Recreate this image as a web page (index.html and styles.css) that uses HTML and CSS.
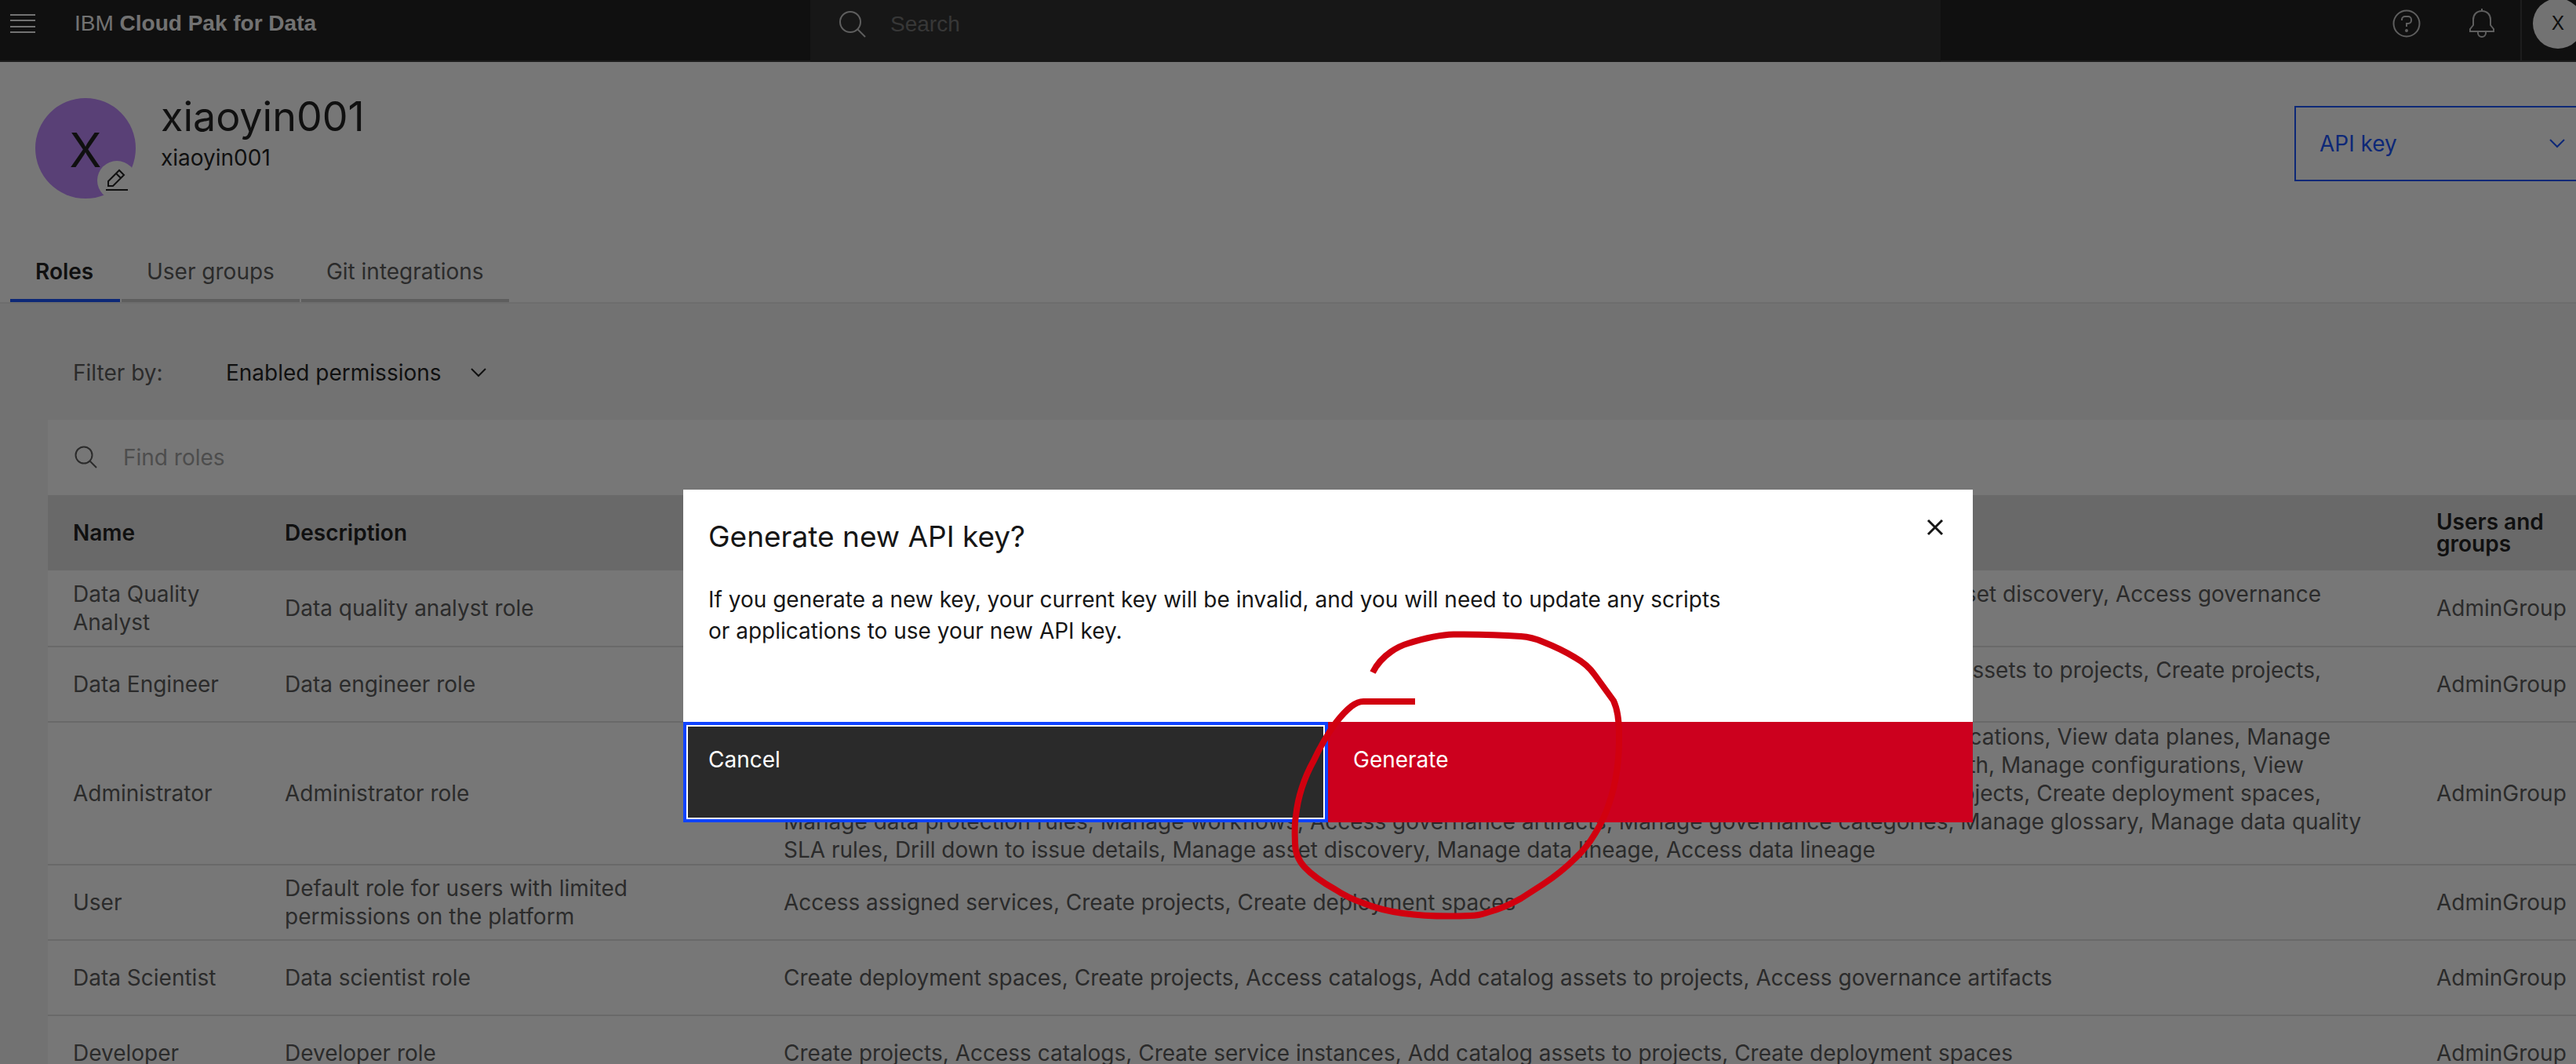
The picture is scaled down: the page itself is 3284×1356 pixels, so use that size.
FILE: index.html
```html
<!DOCTYPE html>
<html lang="en">
<head>
<meta charset="utf-8">
<title>IBM Cloud Pak for Data</title>
<link rel="stylesheet" href="styles.css">
</head>
<body>
<div class="app">
  <header class="topbar">
    <button class="icon-button menu" aria-label="Open menu">
      <svg width="32" height="24" viewBox="0 0 32 24" fill="currentColor"><path d="M0 0h32v2H0zM0 7h32v2H0zM0 15h32v2H0zM0 22h32v2H0z"/></svg>
    </button>
    <a class="brand" href="#">IBM <strong>Cloud Pak for Data</strong></a>
    <label class="global-search">
      <svg width="36" height="36" viewBox="0 0 36 36" fill="none" stroke="currentColor" stroke-width="2"><circle cx="15" cy="15" r="13"/><path d="M24 24l10 10"/></svg>
      <input type="search" placeholder="Search" aria-label="Search">
    </label>
    <div class="tools">
      <button class="icon-button" aria-label="Help">
        <svg width="36" height="36" viewBox="0 0 36 36" fill="none" stroke="currentColor" stroke-width="2"><circle cx="18" cy="18" r="16.500"/><path d="M12 14v-1a4 4 0 0 1 4-4h4a4 4 0 0 1 4 4v1a4 4 0 0 1-4 4h-2v4"/><circle cx="18" cy="27" r="1" fill="currentColor"/></svg>
      </button>
      <button class="icon-button" aria-label="Notifications">
        <svg width="36" height="40" viewBox="0 0 36 40" fill="none" stroke="currentColor" stroke-width="2"><path d="M18 1v4M18 4C11 4 7 9 7 15v7l-4 5v3h30v-3l-4-5v-7C29 9 25 4 18 4zM13 30v2a5 5 0 0 0 10 0v-2"/></svg>
      </button>
      <div class="account"><button class="account-button" aria-label="Account">X</button></div>
    </div>
  </header>

  <section class="profile">
    <div class="profile-head">
      <div class="avatar">X
        <button class="avatar-edit" aria-label="Edit picture">
          <svg width="30" height="30" viewBox="0 0 30 30" fill="none" stroke="currentColor" stroke-width="2"><path d="M1 27h28M4 22v-6L18 2l6 6-14 14zM14 6l6 6"/></svg>
        </button>
      </div>
      <div class="identity">
        <h1>xiaoyin001</h1>
        <p>xiaoyin001</p>
      </div>
      <button class="api-key">API key
        <svg width="22" height="14" viewBox="0 0 22 14" fill="none" stroke="currentColor" stroke-width="2"><path d="M2 2l9 9 9-9"/></svg>
      </button>
    </div>
    <nav class="tabs">
      <a class="tab active" href="#">Roles</a>
      <a class="tab" href="#">User groups</a>
      <a class="tab" href="#">Git integrations</a>
    </nav>
  </section>

  <main class="content">
    <div class="filter">
      <label for="filter">Filter by:</label>
      <div class="select">
        <select id="filter"><option>Enabled permissions</option></select>
        <svg width="22" height="14" viewBox="0 0 22 14" fill="none" stroke="currentColor" stroke-width="2"><path d="M2 2l9 9 9-9"/></svg>
      </div>
    </div>
    <label class="find">
      <svg width="30" height="30" viewBox="0 0 30 30" fill="none" stroke="currentColor" stroke-width="2"><circle cx="12" cy="12" r="10.500"/><path d="M19 19l9 9"/></svg>
      <input type="search" placeholder="Find roles" aria-label="Find roles">
    </label>
    <table class="roles">
      <colgroup><col class="c-name"><col class="c-desc"><col class="c-perm"><col></colgroup>
      <thead><tr><th>Name</th><th>Description</th><th>Permissions</th><th>Users and groups</th></tr></thead>
      <tbody>
        <tr><td>Data Quality Analyst</td><td>Data quality analyst role</td>
          <td><div class="line"><span>Access catalogs, Create projects, Manage data quality SLA rules, Drill down to issue details, Manage</span>asset discovery, Access governance</div>artifacts</td>
          <td>AdminGroup</td></tr>
        <tr><td>Data Engineer</td><td>Data engineer role</td>
          <td><div class="line"><span>Manage asset discovery, Access catalogs, Access governance artifacts, Add catalog</span>assets to projects, Create projects,</div>Create deployment spaces</td>
          <td>AdminGroup</td></tr>
        <tr><td>Administrator</td><td>Administrator role</td>
          <td><div class="line long"><span>Administer platform, Manage platform users, Manage user groups, Manage platform roles, View</span>applications, View data planes, Manage</div>
            <div class="line short"><span>data planes, Manage service instances, Monitor platform, View platform</span>health, Manage configurations, View</div>
            <div class="line"><span>configurations, Manage catalogs, Access catalogs, Manage projects, Create</span>projects, Create deployment spaces,</div>
            Manage data protection rules, Manage workflows, Access governance artifacts, Manage governance categories, Manage glossary, Manage data quality<br>SLA rules, Drill down to issue details, Manage asset discovery, Manage data lineage, Access data lineage</td>
          <td>AdminGroup</td></tr>
        <tr><td>User</td><td>Default role for users with limited permissions on the platform</td><td>Access assigned services, Create projects, Create deployment spaces</td><td>AdminGroup</td></tr>
        <tr><td>Data Scientist</td><td>Data scientist role</td><td>Create deployment spaces, Create projects, Access catalogs, Add catalog assets to projects, Access governance artifacts</td><td>AdminGroup</td></tr>
        <tr><td>Developer</td><td>Developer role</td><td>Create projects, Access catalogs, Create service instances, Add catalog assets to projects, Create deployment spaces</td><td>AdminGroup</td></tr>
      </tbody>
    </table>
  </main>
</div>

<div class="backdrop">
  <div class="modal" role="dialog" aria-modal="true" aria-labelledby="modal-title">
    <div class="modal-body">
      <div class="modal-head">
        <h2 id="modal-title">Generate new API key?</h2>
        <button class="icon-button close" aria-label="Close">
          <svg width="24" height="24" viewBox="0 0 24 24" fill="none" stroke="currentColor" stroke-width="3"><path d="M3 3l18 18M21 3L3 21"/></svg>
        </button>
      </div>
      <p>If you generate a new key, your current key will be invalid, and you will need to update any scripts or applications to use your new API key.</p>
    </div>
    <div class="modal-actions">
      <button class="cancel">Cancel</button>
      <button class="generate">Generate</button>
    </div>
  </div>
</div>
<svg class="pen" width="440" height="380" viewBox="1640 795 440 380" fill="none" stroke="currentColor" stroke-width="8" stroke-linejoin="round" aria-hidden="true">
  <path d="M1750 857C1762 833 1785 823 1795 820Q1830 809 1853 808.500Q1900 808 1939 811Q1953 812 1967 818Q1990 827 2008 838Q2024 847 2033 860L2057 893Q2064 908 2064 935Q2065 985 2051 1025Q2044 1046 2033 1063Q2023 1080 2008 1094Q1990 1112 1967 1127L1939 1145Q1918 1157 1896 1163Q1885 1167 1874 1167Q1825 1169 1789 1164Q1760 1160 1738 1151Q1718 1144 1703 1134Q1676 1119 1663 1105Q1651 1092 1651 1074Q1650 1050 1652 1040Q1656 1003 1675 969Q1687 943 1703 921Q1714 907 1723 900Q1731 894 1738 894H1804"/>
</svg>
</body>
</html>
```
FILE: styles.css
```css
* { box-sizing: border-box; }
body {
  margin: 0;
  height: 100vh;
  overflow: hidden;
  position: relative;
  font: 28px/36px Inter, "Liberation Sans", sans-serif;
  color: #161616;
  background: #f4f4f4;
}
h1, h2, p { margin: 0; font-weight: 400; }
a { color: inherit; text-decoration: none; }
button, input, select { font: inherit; color: inherit; border: 0; border-radius: 0; padding: 0; background: none; }
svg { display: block; flex: none; }
.app { height: 100%; overflow: hidden; }

.topbar {
  display: flex;
  align-items: center;
  height: 79px;
  padding-bottom: 17px;
  border-bottom: 2px solid #333;
  background: #161616;
  color: #f4f4f4;
  font-family: "Liberation Sans", Arial, sans-serif;
}
.menu { margin-left: 13px; }
.brand { width: 938px; margin-left: 50px; }
.global-search {
  display: flex;
  align-items: center;
  gap: 30px;
  width: 1441px;
  height: 79px;
  padding: 0 36px 17px;
  margin-bottom: -19px;
  background: #262626;
  color: #c6c6c6;
}
.global-search input { flex: 1; }
.global-search input::placeholder { color: #6f6f6f; opacity: 1; }
.tools { display: flex; align-items: center; margin-left: auto; gap: 60px; color: #c6c6c6; }
.account { display: flex; align-items: center; height: 79px; padding: 0 0 17px 14px; margin: 0 -9px -17px -29px; border-left: 2px solid #333; }
.account-button { width: 64px; height: 64px; flex: none; border-radius: 50%; background: #f4f4f4; color: #161616; font: 24px/32px Inter, sans-serif; }

.profile { height: 308px; background: #fff; border-bottom: 2px solid #e8e8e8; display: flex; flex-direction: column; justify-content: space-between; }
.profile-head { display: flex; align-items: flex-start; padding: 46px 0 0 45px; }
.avatar { position: relative; width: 128px; height: 128px; border-radius: 50%; background: #ba83fc; font-size: 60px; line-height: 132px; text-align: center; }
.avatar-edit { position: absolute; right: -1px; bottom: -2px; width: 50px; height: 50px; border-radius: 50%; background: #fff; display: grid; place-items: center; }
.identity { margin-left: 32px; }
.identity h1 { font-size: 52px; line-height: 48px; }
.identity p { margin-top: 10px; }
.api-key { display: flex; align-items: center; justify-content: space-between; width: 400px; height: 96px; padding: 0 52px 0 30px; margin: 10px -41px 0 auto; border: 2px solid #0f4bff; color: #0f4bff; }
.tabs { display: flex; gap: 2px; margin-left: 13px; }
.tab { min-width: 140px; padding: 0 32px 17px; border-bottom: 4px solid #c6c6c6; color: #525252; }
.tab.active { border-color: #0f4bff; color: #161616; font-weight: 600; }

.content { padding-left: 61px; }
.filter { display: flex; align-items: center; height: 148px; padding: 28px 32px 0; color: #525252; }
.filter label { width: 195px; }
.select { display: flex; align-items: center; gap: 36px; color: #161616; }
.select select { appearance: none; }
.find { display: flex; align-items: center; gap: 32px; height: 96px; padding: 0 34px; background: #fff; color: #525252; }
.find input { flex: 1; }
.find input::placeholder { color: #a0a0a0; opacity: 1; }
.roles { width: 100%; table-layout: fixed; border-spacing: 0; background: #fff; }
.c-name { width: 270px; }
.c-desc { width: 636px; }
.c-perm { width: 2107px; }
.roles th { height: 96px; padding: 0 32px; background: #e0e0e0; text-align: left; font-weight: 600; line-height: 28px; }
.roles td { height: 96px; padding: 0 32px; border-bottom: 2px solid #e0e0e0; color: #525252; vertical-align: middle; }
.roles tr:first-child td { height: 98px; }
.roles td:nth-child(2) { padding-right: 120px; }
.roles td:nth-child(3) { white-space: nowrap; }
.roles td:last-child, .roles th:last-child { padding-right: 0; }
.line { display: flex; justify-content: space-between; width: 1960px; }
.line.long { width: 1972px; }
.line.short { width: 1938px; }
.line span { width: 1360px; overflow: hidden; }

.backdrop {
  position: fixed;
  inset: 0;
  display: flex;
  align-items: flex-start;
  justify-content: center;
  padding: 624px 0 0 102px;
  background: rgba(13, 13, 13, .56);
}
.modal { width: 1644px; background: #fff; }
.modal-body { min-height: 296px; padding: 34px 32px; }
.modal-head { display: flex; justify-content: space-between; }
.modal-head h2 { font-size: 37px; line-height: 52px; }
.close { align-self: flex-start; margin: 2px 4px 0 0; }
.modal-body p { width: 1310px; margin-top: 34px; line-height: 40px; }
.modal-actions { display: grid; grid-template-columns: 1fr 1fr; }
.modal-actions button { height: 128px; padding: 0 32px 32px; text-align: left; color: #fff; }
.modal-actions .cancel { padding: 0 28px 32px; background: #2a2a2a; border: 4px solid #0f43ff; box-shadow: inset 0 0 0 2px #fff; }
.generate { background: #cc001e; }
.pen { position: absolute; left: 1640px; top: 795px; color: #d1000f; }
```
